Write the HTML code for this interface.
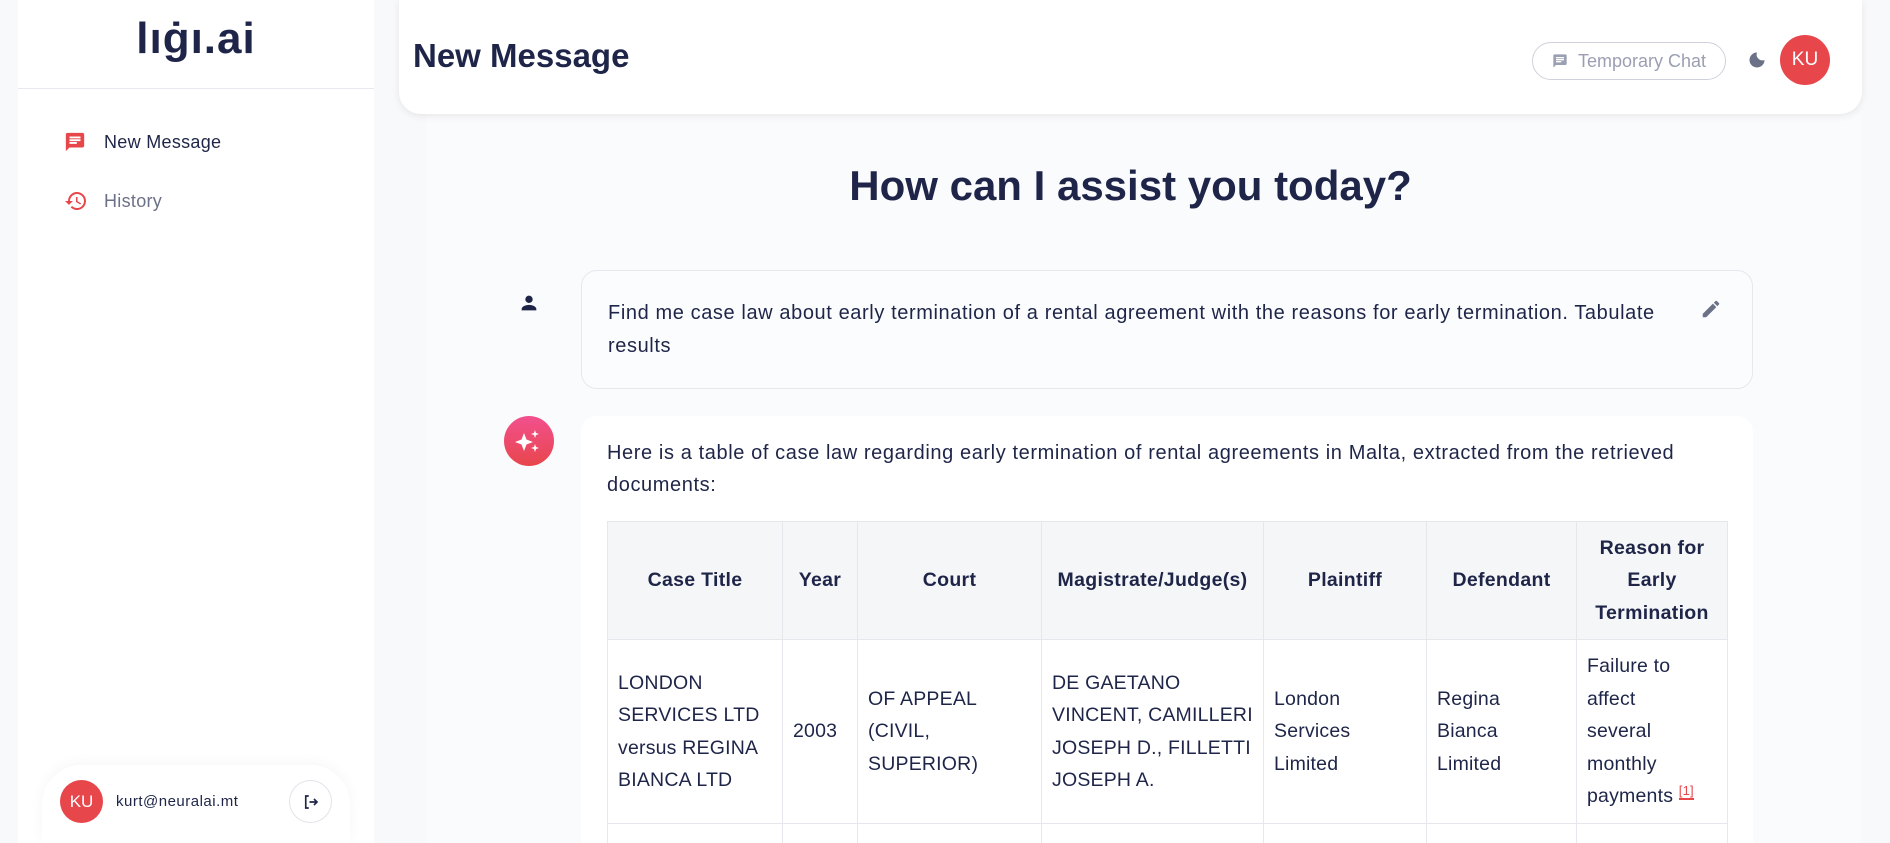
<!DOCTYPE html>
<html style="width:1890px;height:843px;overflow:hidden"><head><meta charset="utf-8"><style>
*{box-sizing:border-box;margin:0;padding:0}
body{width:1890px;height:843px;overflow:hidden;background:#f8f9fb;font-family:"Liberation Sans",sans-serif;color:#1e2548;position:relative}
.side{position:absolute;left:18px;top:0;width:356px;height:843px;background:#fff}
.logo{position:absolute;left:0;width:356px;top:14px;text-align:center;font-size:44px;font-weight:bold;color:#1e2548;letter-spacing:1px}
.div{position:absolute;left:0;top:88px;width:356px;height:1px;background:#e7e9ef}
.nav{position:absolute;left:46px;font-size:18px;display:flex;align-items:center;gap:18px;letter-spacing:0.3px}
.usercard{position:absolute;left:24px;top:765px;width:308px;height:78px;background:#fff;border-radius:39px 39px 0 0;box-shadow:0 -2px 14px rgba(0,0,0,.04)}
.av{border-radius:50%;background:#e7464b;color:#fff;display:flex;align-items:center;justify-content:center}
.header{position:absolute;left:399px;top:0;width:1463px;height:114px;background:#fff;border-radius:0 0 22px 22px;box-shadow:0 2px 8px rgba(0,0,0,.08)}
.main{position:absolute;left:426px;top:114px;width:1436px;height:729px;background:#fafbfd}
h1{position:absolute;left:399px;width:1463px;top:162px;text-align:center;font-size:42px;font-weight:bold}
.bubble{position:absolute;left:581px;width:1172px;border:1px solid #e6e8ee;border-radius:16px;background:#fbfcfe}
.wrap{position:absolute;left:581px;top:416px;width:1172px;height:427px;overflow:hidden;background:#fff;border-radius:16px 16px 0 0}
table{position:absolute;left:26px;top:105px;border-collapse:collapse;table-layout:fixed;width:1120px;font-size:19.5px;line-height:32.5px;letter-spacing:0.2px;white-space:nowrap}
td,th{border:1px solid #e5e7ec;padding:0 10px;vertical-align:middle;overflow:hidden}
th{background:#f5f6f7;height:118px;font-weight:bold;text-align:center;letter-spacing:0.3px}
td{height:184px;background:#fff}
</style></head><body>
<div class="side">
 <div class="logo">lıġı.ai</div>
 <div class="div"></div>
 <div class="nav" style="top:131px"><svg width="22" height="22" viewBox="0 0 24 24"><path fill="#e7464b" d="M20 2H4a2 2 0 0 0-2 2v18l4-4h14a2 2 0 0 0 2-2V4a2 2 0 0 0-2-2zM6 9h12v2H6zm8 5H6v-2h8zm4-6H6V6h12z"/></svg><span>New Message</span></div>
 <div class="nav" style="top:189px;color:#6b7186;gap:16px"><svg width="24" height="24" viewBox="0 0 24 24"><path fill="#e7464b" d="M13 3a9 9 0 0 0-9 9H1l3.9 3.9L9 12H6a7 7 0 1 1 2.05 4.95l-1.42 1.42A9 9 0 1 0 13 3zm-1 5v5l4.3 2.5.7-1.2-3.5-2.1V8z"/></svg><span>History</span></div>
 <div class="usercard">
  <div class="av" style="position:absolute;left:18px;top:15px;width:43px;height:43px;font-size:17px">KU</div>
  <div style="position:absolute;left:74px;top:28px;font-size:15px;letter-spacing:0.5px">kurt@neuralai.mt</div>
  <div style="position:absolute;left:247px;top:15px;width:43px;height:43px;border:1px solid #e2e4ea;border-radius:50%;display:flex;align-items:center;justify-content:center"><svg width="18" height="18" viewBox="0 0 24 24" fill="none" stroke="#1e2548" stroke-width="2.2"><path d="M9 4H5v16h4M10 12h10M16 8l4 4-4 4"/></svg></div>
 </div>
</div>
<div class="main"></div>
<div class="header">
 <div style="position:absolute;left:14px;top:37px;font-size:33px;font-weight:bold">New Message</div>
 <div style="position:absolute;left:1133px;top:42px;width:194px;height:38px;border:1px solid #cfd2dc;border-radius:19px;display:flex;align-items:center;justify-content:center;gap:10px;color:#9a9fb2;font-size:18px"><svg width="16" height="16" viewBox="0 0 24 24"><path fill="#9a9fb2" d="M20 2H4a2 2 0 0 0-2 2v18l4-4h14a2 2 0 0 0 2-2V4a2 2 0 0 0-2-2zM6 9h12v2H6zm8 5H6v-2h8zm4-6H6V6h12z"/></svg>Temporary Chat</div>
 <svg style="position:absolute;left:1348px;top:50px" width="20" height="20" viewBox="0 0 24 24"><path fill="#6b7186" d="M12 3a9 9 0 1 0 9 9 7 7 0 0 1-9-9z"/></svg>
 <div class="av" style="position:absolute;left:1381px;top:35px;width:50px;height:50px;font-size:19px">KU</div>
</div>
<h1>How can I assist you today?</h1>
<svg style="position:absolute;left:518px;top:292px" width="22" height="22" viewBox="0 0 24 24"><path fill="#1e2548" d="M12 12a4 4 0 1 0 0-8 4 4 0 0 0 0 8zm0 2c-3 0-8 1.5-8 4.5V20h16v-1.5C20 15.5 15 14 12 14z"/></svg>
<div class="bubble" style="top:270px;height:119px"></div>
<div style="position:absolute;left:608px;top:297px;width:1080px;font-size:20px;line-height:33px;letter-spacing:0.6px">Find me case law about early termination of a rental agreement with the reasons for early termination. Tabulate results</div>
<svg style="position:absolute;left:1700px;top:298px" width="22" height="22" viewBox="0 0 24 24"><path fill="#6b7186" d="M3 17.25V21h3.75L17.8 9.94l-3.75-3.75zM20.7 7.04a1 1 0 0 0 0-1.41l-2.34-2.34a1 1 0 0 0-1.41 0l-1.83 1.83 3.75 3.75z"/></svg>
<div style="position:absolute;left:504px;top:416px;width:50px;height:50px;border-radius:50%;background:linear-gradient(#f2508f,#e8464b)"><svg width="50" height="50" viewBox="0 0 50 50"><path fill="#fff" d="M20 17l2.5 6.5L29 26l-6.5 2.5L20 35l-2.5-6.5L11 26l6.5-2.5z M31 14l1 3 3 1-3 1-1 3-1-3-3-1 3-1z M31 28l1 3 3 1-3 1-1 3-1-3-3-1 3-1z"/></svg></div>
<div class="wrap">
<div style="position:absolute;left:26px;top:21px;width:1110px;font-size:20px;line-height:32px;letter-spacing:0.6px">Here is a table of case law regarding early termination of rental agreements in Malta, extracted from the retrieved documents:</div>
<table>
<colgroup><col style="width:175px"><col style="width:75px"><col style="width:184px"><col style="width:222px"><col style="width:163px"><col style="width:150px"><col style="width:151px"></colgroup>
<tr><th>Case Title</th><th>Year</th><th>Court</th><th>Magistrate/Judge(s)</th><th>Plaintiff</th><th>Defendant</th><th>Reason for<br>Early<br>Termination</th></tr>
<tr><td>LONDON<br>SERVICES LTD<br>versus REGINA<br>BIANCA LTD</td><td>2003</td><td>OF APPEAL<br>(CIVIL,<br>SUPERIOR)</td><td>DE GAETANO<br>VINCENT, CAMILLERI<br>JOSEPH D., FILLETTI<br>JOSEPH A.</td><td>London<br>Services<br>Limited</td><td>Regina<br>Bianca<br>Limited</td><td>Failure to<br>affect<br>several<br>monthly<br>payments <sup style="color:#e7464b;font-size:13px;border-bottom:2px solid #e7464b;line-height:1">[1]</sup></td></tr>
<tr><td style="height:40px"></td><td></td><td></td><td></td><td></td><td></td><td></td></tr>
</table>
</div>
</body></html>
